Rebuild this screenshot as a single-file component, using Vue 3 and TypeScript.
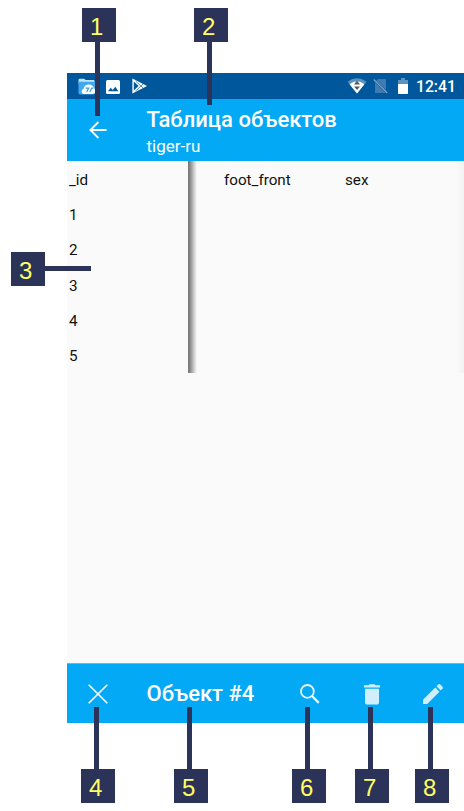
<script setup lang="ts">
interface Callout {
  n: number
  x: number
  y: number
  dir: 'down' | 'up' | 'right'
  length: number
}

const ids: number[] = [1, 2, 3, 4, 5]

const callouts: Callout[] = [
  { n: 1, x: 82, y: 8, dir: 'down', length: 74 },
  { n: 2, x: 194, y: 8, dir: 'down', length: 63 },
  { n: 3, x: 11, y: 252, dir: 'right', length: 46 },
  { n: 4, x: 81, y: 769, dir: 'up', length: 62 },
  { n: 5, x: 174, y: 769, dir: 'up', length: 62 },
  { n: 6, x: 292, y: 769, dir: 'up', length: 62 },
  { n: 7, x: 355, y: 769, dir: 'up', length: 62 },
  { n: 8, x: 415, y: 769, dir: 'up', length: 62 },
]

const leaderStyle = (c: Callout) =>
  c.dir === 'right' ? { width: `${c.length}px` } : { height: `${c.length}px` }
</script>

<template>
  <div class="page">
    <main class="phone">
      <div class="status">
        <svg class="files" viewBox="0 0 18 18">
          <path d="M0 2Q0 .8 1.2 .8H6L7.5 2H16Q17 2 17 3.2V6H0Z" fill="#bfe5fb" />
          <path d="M0 4H17.5V16Q17.5 17.5 16 17.5H1.5Q0 17.5 0 16Z" fill="#3fa9f0" />
          <path d="M6 17Q3 16.8 3.4 13.8Q3.7 12 5.4 11.5Q5.8 7.2 10.5 6.8Q15.1 6.6 16.3 10.5Q18 11.6 18 14.4Q17.6 17 15 17Z" fill="#fff" />
          <path d="M7.6 10.6H10.8L8.6 14.8M12 14.8L14 10.6H15.8" fill="none" stroke="#3b9ee6" stroke-width="1.3" />
        </svg>
        <svg class="photo" viewBox="0 0 14 14">
          <rect width="14" height="14" rx="1.5" fill="#fff" />
          <path d="M2 11.3L4.7 7.7L6.7 10L9.3 6.8L12.4 11.3Z" fill="#01579b" />
        </svg>
        <svg class="play" viewBox="0 0 15 16">
          <path d="M.4 .4L15 8L.4 15.6Z" fill="#fff" />
          <path d="M1.8 3.6L6.6 8L1.8 12.4Z" fill="#01579b" />
          <path d="M3.6 3L11.4 10.3M3.6 13L11.4 5.7" stroke="#01579b" stroke-width=".7" />
        </svg>
        <span class="spacer"></span>
        <svg class="wifi" viewBox="0 0 20 16">
          <path d="M.5 3.7Q10 -3 19.5 3.7L10 15.5Z" fill="#5c92bf" />
          <path d="M2.6 6.2Q10 .4 17.4 6.2L10 15.5Z" fill="#fff" />
          <path d="M10 2.6L13 6.4H7ZM7 8.4H13L10 12Z" fill="#555b60" />
        </svg>
        <svg class="sim" viewBox="0 0 15 16">
          <path d="M5 1H12.2Q13 1 13 1.8V12.1L3.2 2.8ZM2 4.2L12.5 15H2Z" fill="#3f7bb0" />
          <path d="M.8 1.5L14.2 15" stroke="#7ea8cb" stroke-width="1.1" />
        </svg>
        <svg class="battery" viewBox="0 0 10 16">
          <path d="M0 2H3V0H7V2H10V7H0Z" fill="#5c92bf" />
          <path d="M0 6H10V15.2Q10 16 9.2 16H.8Q0 16 0 15.2Z" fill="#fff" />
        </svg>
        <span class="clock">12:41</span>
      </div>

      <header class="appbar">
        <svg class="back" viewBox="0 0 18 18">
          <path d="M17.5 9H1.5M9.4 1L1.4 9L9.4 17" fill="none" stroke="#fff" stroke-width="1.8" />
        </svg>
        <div class="heading">
          <h1>Таблица объектов</h1>
          <p>tiger-ru</p>
        </div>
      </header>

      <section class="table">
        <div class="frozen">
          <div class="cell">_id</div>
          <div v-for="id in ids" :key="id" class="cell">{{ id }}</div>
        </div>
        <div class="shade"></div>
        <div class="columns">
          <div class="cell foot">foot_front</div>
          <div class="cell">sex</div>
        </div>
        <div class="edge"></div>
      </section>

      <footer class="actions">
        <svg class="close" viewBox="0 0 20 20">
          <path d="M.7 .7L19.3 19.3M19.3 .7L.7 19.3" stroke="#fff" stroke-width="1.6" />
        </svg>
        <span class="object">Объект #4</span>
        <svg class="search" viewBox="0 0 20 20">
          <circle cx="7.4" cy="7.4" r="6.4" fill="none" stroke="#e6f6ff" stroke-width="1.8" />
          <path d="M12 12L18.8 18.8" stroke="#e6f6ff" stroke-width="2.4" />
        </svg>
        <svg class="trash" viewBox="0 0 16 21">
          <path d="M0 1.2H4.5L5.5 .2H10.5L11.5 1.2H16V3.4H0ZM1 4.8H15V18.4Q15 20.6 12.8 20.6H3.2Q1 20.6 1 18.4Z" fill="#d0effd" />
        </svg>
        <svg class="pencil" viewBox="3 3 18 18">
          <path d="M3 17.25V21h3.75L17.81 9.94l-3.75-3.75L3 17.25zM20.71 7.04c.39-.39.39-1.02 0-1.41l-2.34-2.34c-.39-.39-1.02-.39-1.41 0l-1.83 1.83 3.75 3.75 1.83-1.83z" fill="#d0effd" />
        </svg>
      </footer>
    </main>

    <div
      v-for="c in callouts"
      :key="c.n"
      class="callout"
      :style="{ left: `${c.x}px`, top: `${c.y}px` }"
    >
      <span class="leader" :class="c.dir" :style="leaderStyle(c)"></span>
      <span class="number">{{ c.n }}</span>
    </div>
  </div>
</template>

<style>
body {
  background: #fff;
}
</style>

<style scoped>
.page {
  position: relative;
  width: 464px;
  height: 811px;
  box-sizing: border-box;
  padding: 73px 0 88px 67px;
  overflow: hidden;
  background: #fff;
  font-family: Roboto, 'Liberation Sans', sans-serif;
}
svg {
  display: block;
  flex: none;
}
.phone {
  display: flex;
  flex-direction: column;
  height: 650px;
  background: #fafafa;
}
.status {
  display: flex;
  align-items: center;
  height: 26px;
  box-sizing: border-box;
  padding: 1px 9px 0 11px;
  background: #01579b;
}
.files { width: 18px; height: 17px; }
.photo { width: 14px; height: 14px; margin-left: 10px; }
.play { width: 15px; height: 16px; margin: 0 0 1px 12px; }
.spacer { flex: 1; }
.wifi { width: 20px; height: 16px; margin-bottom: 1px; }
.sim { width: 15px; height: 16px; margin: 0 0 1px 6px; }
.battery { width: 10px; height: 16px; margin: 0 0 1px 10px; }
.clock {
  width: 39px;
  margin-left: 8px;
  color: #fff;
  font-size: 15.7px;
  font-weight: 500;
  line-height: 24px;
  white-space: nowrap;
}
.appbar {
  display: flex;
  height: 62px;
  background: #03a9f4;
}
.back {
  width: 18px;
  height: 18px;
  margin: 22px 0 0 22px;
}
.heading {
  margin-left: 39.5px;
  color: #fff;
}
h1 {
  margin: 7px 0 0;
  font-size: 22px;
  font-weight: 500;
  line-height: 28px;
  white-space: nowrap;
}
p {
  margin: 2px 0 0;
  font-size: 17px;
  line-height: 20px;
}
.table {
  display: flex;
  flex: none;
  height: 212px;
  color: #111;
  font-size: 15.2px;
}
.frozen {
  width: 121px;
  box-sizing: border-box;
  padding-left: 2px;
}
.cell {
  height: 35.2px;
  line-height: 38px;
}
.shade {
  width: 9px;
  background: linear-gradient(90deg, #777 0, #858585 20%, #bbb 55%, #ddd 78%, #fafafa 100%);
}
.columns {
  display: flex;
  flex: 1;
  padding-left: 27px;
}
.foot {
  width: 121px;
}
.edge {
  width: 8px;
  background: linear-gradient(90deg, #fafafa, #f2f2f2);
}
.actions {
  display: flex;
  align-items: center;
  height: 60px;
  box-sizing: border-box;
  margin-top: auto;
  padding: 1px 21px 0 21px;
  background: #03a9f4;
  border-top: 1px solid #4fc1f6;
}
.close { width: 20px; height: 20px; }
.object {
  flex: 1;
  margin-left: 38.5px;
  color: #fff;
  font-size: 22px;
  font-weight: 500;
  line-height: 28px;
}
.search { width: 20px; height: 20px; }
.trash { width: 16px; height: 21px; margin-left: 44px; }
.pencil { width: 20px; height: 20px; margin-left: 43.5px; }
.callout {
  position: absolute;
  width: 34px;
  height: 34px;
  background: #2b3359;
}
.number {
  display: block;
  padding-left: 8px;
  color: #ffff66;
  font-family: 'Liberation Sans', Arial, sans-serif;
  font-size: 24px;
  line-height: 37px;
}
.leader {
  position: absolute;
  background: #2b3359;
}
.leader.down {
  top: 34px;
  left: 13px;
  width: 5px;
}
.leader.up {
  bottom: 34px;
  left: 13px;
  width: 5px;
}
.leader.right {
  top: 14px;
  left: 34px;
  height: 5px;
}
</style>
